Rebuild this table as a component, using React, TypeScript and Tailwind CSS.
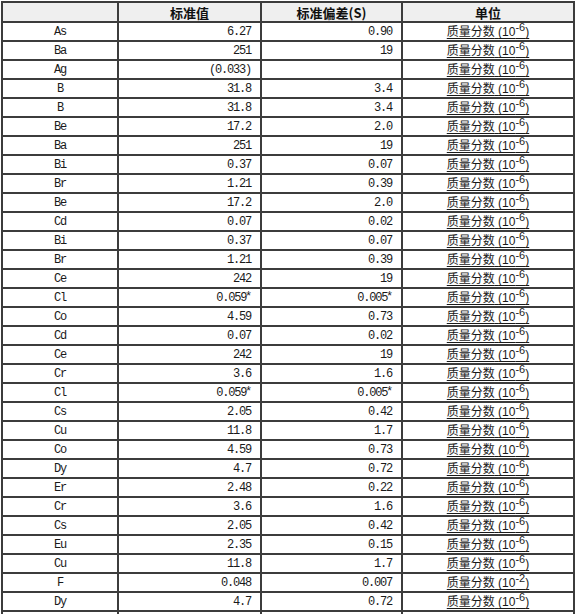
const rows: [string, string, string, string?][] = [
  ["As", "6.27", "0.90"],
  ["Ba", "251", "19"],
  ["Ag", "(0.033)", ""],
  ["B", "31.8", "3.4"],
  ["B", "31.8", "3.4"],
  ["Be", "17.2", "2.0"],
  ["Ba", "251", "19"],
  ["Bi", "0.37", "0.07"],
  ["Br", "1.21", "0.39"],
  ["Be", "17.2", "2.0"],
  ["Cd", "0.07", "0.02"],
  ["Bi", "0.37", "0.07"],
  ["Br", "1.21", "0.39"],
  ["Ce", "242", "19"],
  ["Cl", "0.059*", "0.005*"],
  ["Co", "4.59", "0.73"],
  ["Cd", "0.07", "0.02"],
  ["Ce", "242", "19"],
  ["Cr", "3.6", "1.6"],
  ["Cl", "0.059*", "0.005*"],
  ["Cs", "2.05", "0.42"],
  ["Cu", "11.8", "1.7"],
  ["Co", "4.59", "0.73"],
  ["Dy", "4.7", "0.72"],
  ["Er", "2.48", "0.22"],
  ["Cr", "3.6", "1.6"],
  ["Cs", "2.05", "0.42"],
  ["Eu", "2.35", "0.15"],
  ["Cu", "11.8", "1.7"],
  ["F", "0.048", "0.007", "-2"],
  ["Dy", "4.7", "0.72"],
];

function Num({ v }: { v: string }) {
  if (v.endsWith("*")) {
    return (
      <>
        {v.slice(0, -1)}
        <sup className="relative -top-[1px] font-['Liberation_Sans',sans-serif] text-[12px] tracking-normal leading-none">*</sup>
      </>
    );
  }
  return <>{v}</>;
}

const td = "border-2 border-[#3c3c3c] h-[19px] p-0 leading-none";
const mono = "font-['Liberation_Mono',monospace] text-[12px] tracking-[-1.2px] text-[#1a1a1a]";

export default function App() {
  return (
    <div className="bg-white w-[576px] h-[614px] overflow-hidden pl-[1px] pt-[1px]">
      <table className="border-collapse table-fixed w-[572px] font-['Noto_Sans_CJK_SC',sans-serif]">
        <colgroup>
          <col className="w-[116px]" />
          <col className="w-[143px]" />
          <col className="w-[141px]" />
          <col className="w-[172px]" />
        </colgroup>
        <thead>
          <tr className="bg-[#efefef]">
            <th className={`${td} h-[20px]`}></th>
            <th className={`${td} h-[20px] text-[13px] font-bold text-[#111]`}>标准值</th>
            <th className={`${td} h-[20px] text-[13px] font-bold text-[#111]`}>标准偏差(S)</th>
            <th className={`${td} h-[20px] text-[13px] font-bold text-[#111]`}>单位</th>
          </tr>
        </thead>
        <tbody>
          {rows.map(([el, val, sd, exp], i) => (
            <tr key={i}>
              <td className={`${td} ${mono} text-center`}>{el}</td>
              <td className={`${td} ${mono} text-right pr-[9px]`}>
                <Num v={val} />
              </td>
              <td className={`${td} ${mono} text-right pr-[9px]`}>
                <Num v={sd} />
              </td>
              <td className={`${td} text-center text-[12px] text-[#1a1a1a]`}>
                <span className="underline underline-offset-2">
                  质量分数
                  <span className="font-['Liberation_Sans',sans-serif]">
                    {" "}(10<sup className="text-[11px]">{exp ?? "-6"}</sup>)
                  </span>
                </span>
              </td>
            </tr>
          ))}
          <tr>
            <td className={td}></td>
            <td className={td}></td>
            <td className={td}></td>
            <td className={td}></td>
          </tr>
        </tbody>
      </table>
    </div>
  );
}
